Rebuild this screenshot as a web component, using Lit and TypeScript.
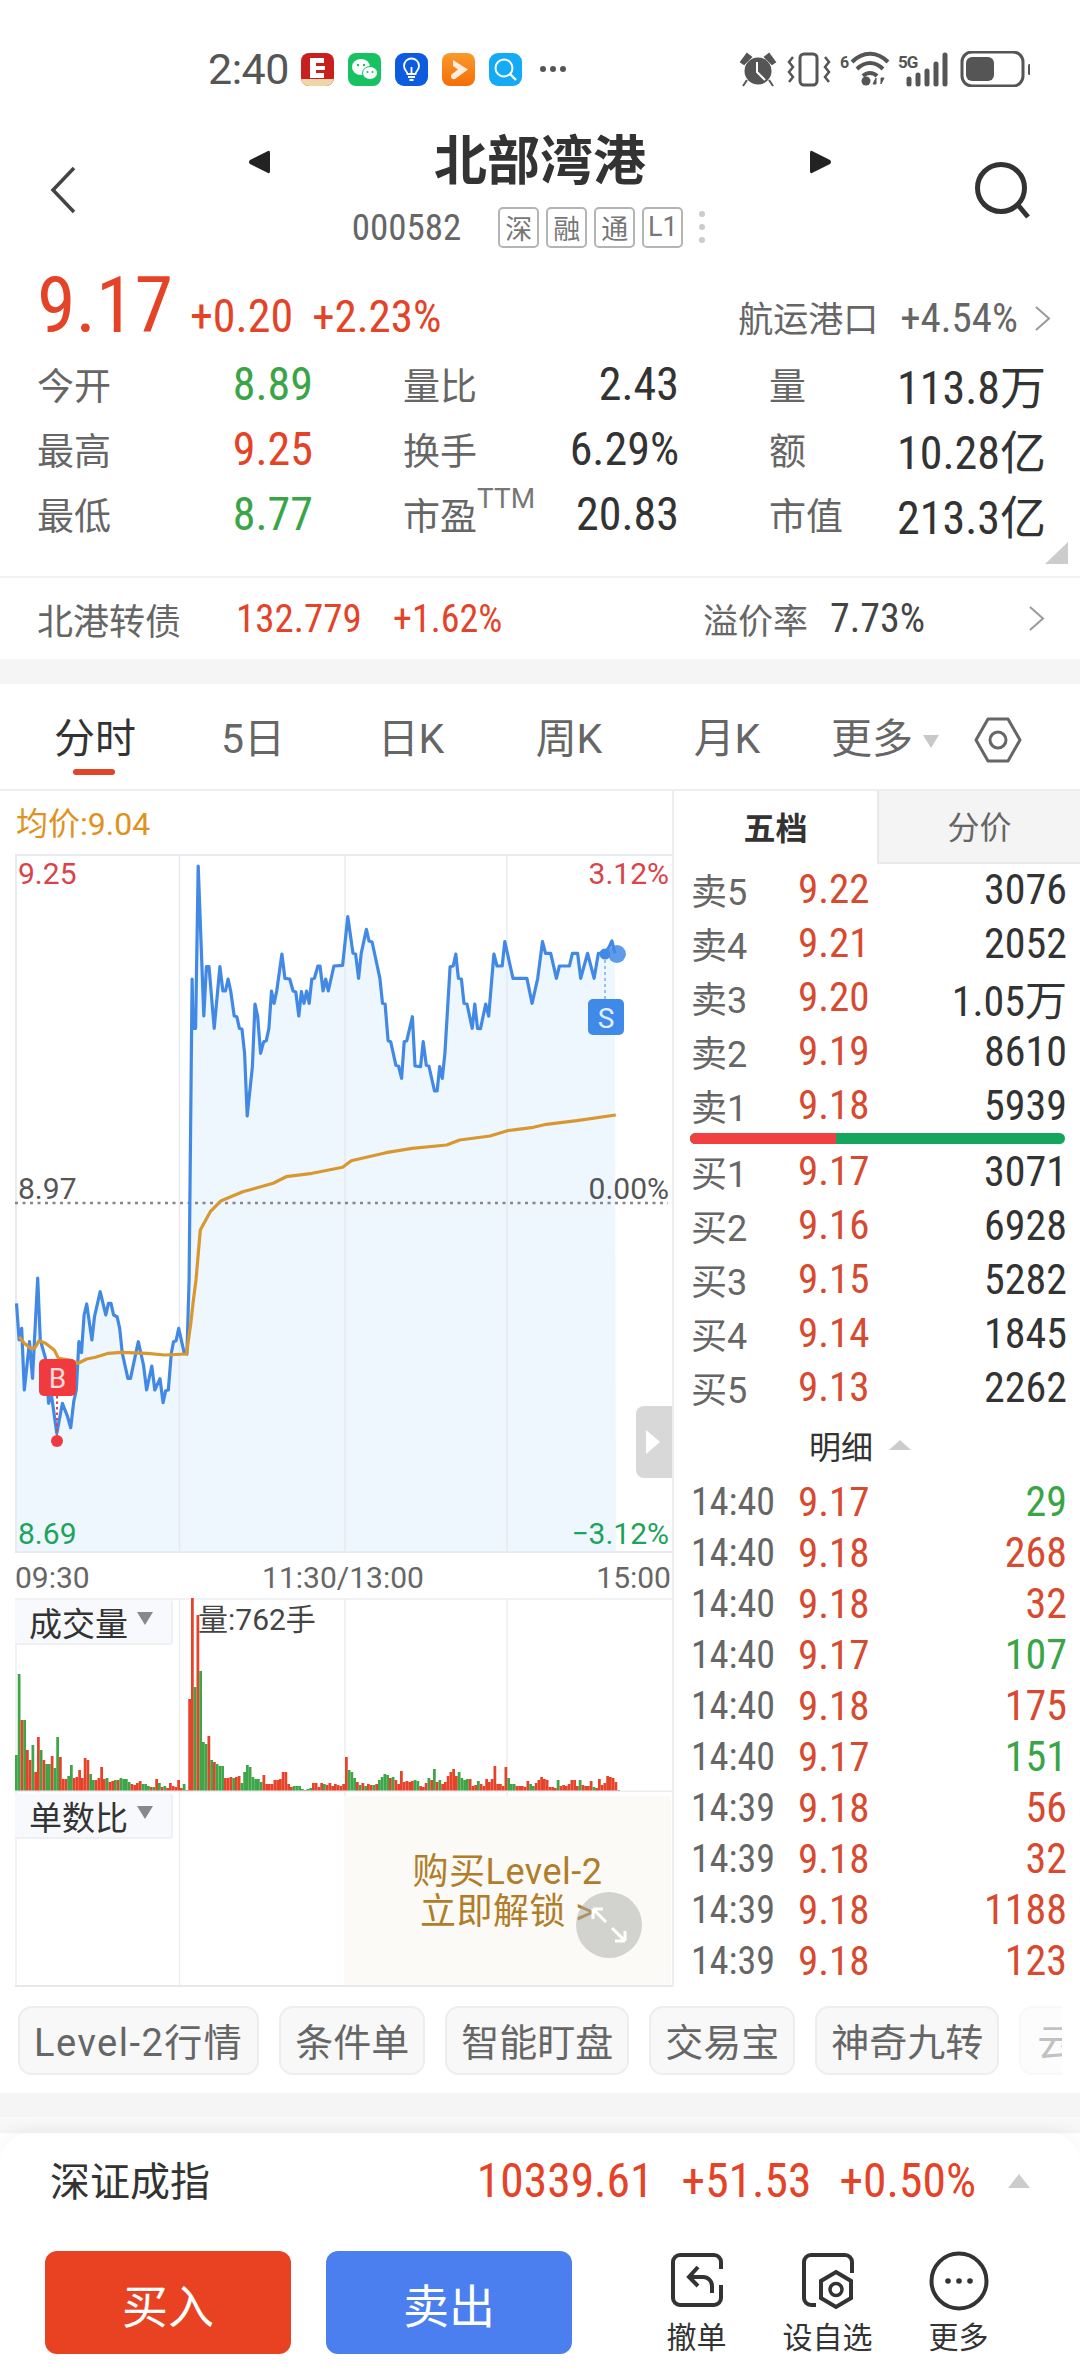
import {LitElement, css, html, svg} from 'lit';
import {customElement} from 'lit/decorators.js';

type Pt = [number, number];

// traced from the crops: x is page x * 2.306, y is (page y - 790) * 3
const PRICE: Pt[] = [
  [38,1540],[44,1650],[50,1615],[56,1800],[68,1655],[75,1765],[87,1464],[93,1650],[105,1705],[112,1840],[118,1810],[131,1930],
  [144,1840],[156,1880],[163,1913],[170,1835],[176,1800],[182,1655],[188,1688],[194,1575],[200,1542],[212,1650],[218,1580],
  [231,1505],[244,1575],[250,1540],[256,1540],[262,1575],[270,1580],[276,1615],[282,1690],[295,1765],[301,1765],[319,1655],
  [331,1725],[338,1800],[350,1728],[357,1800],[369,1766],[376,1838],[382,1802],[388,1800],[395,1690],[400,1655],[406,1652],
  [412,1615],[425,1690],[431,1692],[436,1470],[443,567],[445,715],[451,715],[457,228],[470,678],[476,530],[482,530],[494,715],
  [507,530],[514,603],[520,603],[526,567],[532,603],[540,678],[546,680],[552,715],[558,718],[564,790],[570,978],[582,830],
  [588,642],[594,678],[601,790],[608,755],[614,752],[620,715],[626,603],[632,640],[638,603],[650,492],[657,565],[668,567],
  [676,603],[682,606],[689,678],[695,605],[701,640],[707,603],[713,640],[719,567],[725,565],[733,528],[738,528],[745,603],
  [751,567],[757,603],[770,528],[790,526],[802,380],[814,490],[820,492],[827,565],[833,490],[845,418],[851,453],[858,456],
  [876,565],[882,640],[888,642],[895,752],[901,755],[913,826],[919,828],[926,865],[932,755],[938,752],[951,680],[957,828],
  [970,830],[976,755],[983,826],[989,828],[1002,903],[1008,903],[1014,830],[1020,865],[1026,790],[1038,530],[1045,528],
  [1051,492],[1057,565],[1064,567],[1070,640],[1077,642],[1089,715],[1095,642],[1101,715],[1108,716],[1120,642],[1127,678],
  [1139,492],[1146,528],[1158,528],[1164,455],[1183,565],[1215,565],[1227,640],[1240,565],[1251,455],[1258,490],[1270,490],
  [1283,565],[1290,528],[1313,528],[1320,490],[1332,490],[1339,565],[1355,490],[1370,565],[1380,490],[1395,490],[1405,470],
  [1411,453],[1418,490],
];

const AVG: Pt[] = [
  [44,1640],[56,1660],[70,1675],[80,1675],[90,1652],[105,1660],[125,1680],[135,1705],[160,1710],[180,1720],[200,1707],
  [220,1702],[250,1690],[280,1687],[340,1690],[380,1695],[430,1692],[440,1600],[445,1540],[452,1470],[462,1320],[485,1265],
  [510,1232],[560,1205],[630,1180],[660,1160],[720,1150],[790,1132],[810,1112],[890,1088],[950,1075],[1030,1065],[1060,1050],
  [1130,1038],[1170,1022],[1230,1012],[1260,1003],[1330,992],[1420,975],
];

const toPage = ([x, y]: Pt) => `${(x / 2.306).toFixed(1)},${(790 + y / 3).toFixed(1)}`;
const pricePts = PRICE.map(toPage).join(' ');
const avgPts = AVG.map(toPage).join(' ');

// one bar a minute, positive is red, negative is green
const VOLUME = [
  -37,-118,72,-72,42,32,-47,20,55,-42,32,-28,-28,36,-24,-55,35,13,13,-16,-27,14,15,22,14,34,32,-18,-12,12,14,25,13,-14,10,11,
  -12,12,-14,-13,-13,-10,8,7,9,11,-8,-8,-6,5,-5,13,-9,5,-6,4,9,6,5,12,4,-8,2,93,194,-105,177,-121,-50,-48,56,-32,30,-28,-26,-26,
  14,14,15,-14,15,16,-9,-20,-27,-25,-15,-13,-13,-10,17,8,8,8,12,12,13,20,20,8,5,-6,-6,-6,-3,2,-3,-4,9,9,5,9,-8,7,9,6,8,7,6,8,
  35,-22,-20,-14,10,-7,9,-6,8,7,-7,8,-12,-15,-18,-17,14,-15,12,8,21,10,11,10,11,-12,-11,6,5,9,-14,12,-23,10,-12,8,10,16,20,23,16,
  -20,-14,-12,-13,13,6,7,-11,8,6,13,10,13,26,8,8,6,25,-14,-8,-8,6,6,6,5,11,-8,-6,9,12,15,13,12,5,5,4,-12,6,7,6,8,12,12,6,-12,7,6,
  6,11,-5,4,13,7,9,16,15,14,10,-2,
];

const BOOK = [
  ['卖5', '9.22', '3076'], ['卖4', '9.21', '2052'], ['卖3', '9.20', '1.05万'], ['卖2', '9.19', '8610'], ['卖1', '9.18', '5939'],
];
const BIDS = [
  ['买1', '9.17', '3071'], ['买2', '9.16', '6928'], ['买3', '9.15', '5282'], ['买4', '9.14', '1845'], ['买5', '9.13', '2262'],
];
const TICKS: [string, string, string, boolean][] = [
  ['14:40', '9.17', '29', false], ['14:40', '9.18', '268', true], ['14:40', '9.18', '32', true], ['14:40', '9.17', '107', false],
  ['14:40', '9.18', '175', true], ['14:40', '9.17', '151', false], ['14:39', '9.18', '56', true], ['14:39', '9.18', '32', true],
  ['14:39', '9.18', '1188', true], ['14:39', '9.18', '123', true],
];
const CHIPS = ['Level-2行情', '条件单', '智能盯盘', '交易宝', '神奇九转'];

const chevron = html`<svg class="chev" width="17" height="27" viewBox="0 0 17 27"><path d="M2 2 L15 13.5 L2 25" fill="none" stroke="#999" stroke-width="2"/></svg>`;

@customElement('app-root')
export class AppRoot extends LitElement {
  static styles = css`
    :host {
      display: block;
      width: 1080px;
      height: 2376px;
      overflow: hidden;
      background: #fff;
      color: #333;
      font-family: Roboto, "Noto Sans CJK SC", sans-serif;
    }
    .n { font-stretch: 75%; }
    .red { color: #e44327; }
    .green { color: #3aa547; }
    .dark { color: #333; }

    .status { height: 102px; padding-top: 18px; display: flex; align-items: center; position: relative; }
    .time { margin-left: 208px; width: 93px; font-size: 43px; color: #555; line-height: 1; letter-spacing: -.5px; }
    .apps { display: flex; gap: 14px; }
    .more-dots { margin-left: 18px; }
    .sys { margin-left: auto; margin-right: 50px; }

    .header { height: 140px; display: flex; align-items: center; }
    .back { margin-left: 50px; }
    .mid { flex: 1; display: flex; flex-direction: column; align-items: center; height: 140px; padding-left: 30px; }
    .title-row { height: 84px; display: flex; align-items: center; gap: 164px; }
    .title { font-size: 53px; font-weight: 700; line-height: 1; color: #333; }
    .code-row { height: 56px; display: flex; align-items: center; margin-top: -5px; padding-right: 22px; }
    .code { font-size: 37px; color: #666; margin-right: 37px; }
    .tag { width: 41px; height: 41px; box-sizing: border-box; border: 2px solid #b4b4b4; border-radius: 5px; font-size: 27px;
      display: flex; align-items: center; justify-content: center; color: #777; margin-right: 7px; }
    .vdots { margin-left: 8px; }
    .search { margin-right: 48px; }

    .quote { height: 83px; padding: 7px 29px 0 37px; display: flex; align-items: baseline; }
    .last { font-size: 78px; width: 153px; line-height: 1; }
    .chg { font-size: 46px; margin-right: 19px; line-height: 1; }
    .chg.pct { font-size: 45px; }
    .sector { margin-left: auto; font-size: 35px; color: #666; margin-right: 22px; line-height: 1; }
    .sector-chg { font-size: 41px; color: #666; margin-right: 16px; line-height: 1; }
    .quote .chev { margin-bottom: 3px; }

    .stats { height: 226px; display: grid; grid-template-columns: 276px 276px 277px; column-gap: 90px; grid-auto-rows: 65px;
      padding-left: 37px; position: relative; box-sizing: border-box; padding-top: 1px; }
    .cell { display: flex; align-items: center; justify-content: space-between; }
    .lbl { font-size: 37px; color: #666; position: relative; white-space: nowrap; }
    .lbl sup { font-size: 28px; color: #777; line-height: 0; font-stretch: 88%; vertical-align: 22px; }
    .val { font-size: 46px; white-space: nowrap; }
    .corner { position: absolute; right: 12px; bottom: 12px; width: 0; height: 0; border-left: 23px solid transparent; border-bottom: 22px solid #ccc; }

    .cb { height: 83px; border-top: 2px solid #f2f2f2; display: flex; align-items: center; padding-left: 37px; box-sizing: border-box; }
    .cb span { white-space: nowrap; }
    .cb-name { width: 199px; font-size: 36px; color: #666; }
    .cb-val { width: 157px; font-size: 39px; }
    .cb-chg { width: 310px; font-size: 38px; }
    .cb-lab { width: 127px; font-size: 35px; color: #666; }
    .cb-pre { width: 198px; font-size: 40px; color: #444; }
    .band { height: 25px; background: #f5f5f5; }

    .tabs { display: grid; grid-template-columns: repeat(5, 158px) 158px 68px; padding: 6px 0 0 16px; align-items: center;
      position: relative; box-sizing: border-box; border-bottom: 2px solid #eee; height: 107px; }
    .tab { font-size: 41px; color: #666; text-align: center; line-height: 1; position: relative; white-space: nowrap; }
    .tab.on { color: #333; }
    .tab.on::after { content: ""; position: absolute; left: 57px; top: 50px; width: 42px; height: 6px; border-radius: 3px; background: #e0452c; }
    .tab i { display: inline-block; margin-left: 10px; vertical-align: 5px; border-left: 8px solid transparent; border-right: 8px solid transparent; border-top: 13px solid #c8c8c8; }

    .main { display: flex; height: 1196px; }
    .left { width: 672px; position: relative; flex: none; }
    .right { width: 406px; border-left: 2px solid #eee; height: 1196px; flex: none; }

    .avg { height: 63px; display: flex; align-items: center; padding: 0 0 4px 16px; font-size: 32px; color: #e0921e; box-sizing: border-box; }
    .plot { height: 699px; position: relative; }
    .plot svg, .vol svg { display: block; margin-left: 15px; }
    .tag-l { position: absolute; font-size: 30px; line-height: 1; }
    .handle { position: absolute; left: 636px; top: 552px; width: 36px; height: 72px; background: #d8d8d8; border-radius: 8px 0 0 8px; }
    .handle::after { content: ""; position: absolute; left: 10px; top: 24px; border-left: 14px solid #fff; border-top: 12px solid transparent; border-bottom: 12px solid transparent; }
    .axis { height: 45px; display: flex; justify-content: space-between; align-items: center; padding: 3px 1px 0 15px; box-sizing: border-box; font-size: 30px; color: #666; }
    .vol { height: 194px; position: relative; }
    .ratio { height: 195px; position: relative; }
    .chip-sel { position: absolute; left: 15px; top: 2px; width: 158px; height: 45px; background: #f8f9fc; border: 2px solid #eef0f4; border-top: 0; border-left: 0; box-sizing: border-box;
      border-radius: 3px; font-size: 33px; display: flex; align-items: center; padding-left: 14px; color: #333; }
    .chip-sel i { margin-left: 9px; margin-top: -6px; border-left: 8px solid transparent; border-right: 8px solid transparent; border-top: 13px solid #888; }
    .vol-now { position: absolute; left: 198px; top: -3px; font-size: 30px; color: #444; }
    .unlock { position: absolute; left: 344px; top: 4px; width: 327px; height: 189px; background: #fbfaf6; box-sizing: border-box; padding: 56px 0 0 0;
      color: #b07d2a; font-size: 36px; line-height: 40px; text-align: center; letter-spacing: .5px; }
    .expand { position: absolute; left: 232px; top: 96px; }

    .ob-tabs { display: flex; height: 73px; margin-bottom: -2px; }
    .ob-tab { width: 203px; display: flex; align-items: center; justify-content: center; font-size: 32px; font-weight: 700; color: #333; padding-bottom: 4px; box-sizing: border-box; }
    .ob-tab.off { background: #f4f4f4; font-weight: 400; color: #666; border: 2px solid #e9e9e9; border-right: 0; border-top: 0; }
    .row { display: flex; align-items: center; padding: 0 13px 0 17px; height: 54px; position: relative; }
    .row .a { width: 107px; font-size: 36px; color: #666; white-space: nowrap; }
    .row .p { font-size: 41px; color: #d84a30; }
    .row .q { margin-left: auto; font-size: 42px; color: #333; white-space: nowrap; }
    .split { height: 11px; margin: 1px 15px 0 16px; border-radius: 6px; display: flex; overflow: hidden; background: #13a65c; }
    .split b { display: block; width: 146px; background: #f04040; }
    .detail-h { height: 62px; display: flex; align-items: center; justify-content: center; font-size: 32px; color: #333; padding-right: 34px; }
    .detail-h i { margin-left: 16px; border-left: 11px solid transparent; border-right: 11px solid transparent; border-bottom: 10px solid #ccc; }
    .tick { height: 51px; }
    .tick .a { font-size: 38px; color: #666; font-stretch: 75%; }

    .chips { height: 106px; display: flex; gap: 20px; padding: 19px 0 0 18px; box-sizing: border-box; overflow: hidden; position: relative; }
    .chip { height: 69px; box-sizing: border-box; border: 2px solid #eee; background: #f8f8f8; border-radius: 14px; font-size: 38px; color: #666;
      display: flex; align-items: center; padding: 0 14px 3px; white-space: nowrap; flex: none; }
    .chip.l2 { letter-spacing: 1.5px; }
    .chip.fade { width: 60px; padding-left: 16px; overflow: hidden; opacity: .4; }
    .chips-end { position: absolute; right: 0; top: 0; width: 18px; height: 100%; background: #fff; }

    .shade { height: 16px; background: linear-gradient(#f9f9f9, #f4f4f4); }
    .footer { height: 243px; background: #fff; border-radius: 30px 30px 0 0; box-shadow: 0 -6px 14px rgba(0,0,0,.03); }
    .index { height: 96px; display: flex; align-items: center; padding: 0 50px; }
    .idx-name { font-size: 40px; color: #333; padding-bottom: 4px; }
    .idx-vals { margin-left: auto; display: flex; gap: 28px; font-size: 47.5px; margin-right: 32px; }
    .idx-up { border-left: 11px solid transparent; border-right: 11px solid transparent; border-bottom: 14px solid #ccc; }
    .actions { display: flex; padding: 22px 0 0 45px; align-items: flex-start; }
    .btn { width: 246px; height: 103px; border-radius: 12px; color: #fff; font-size: 46px; display: flex; align-items: center; justify-content: center; margin-right: 35px; }
    .buy { background: #e84222; }
    .sell { background: #4b7ff0; }
    .act { width: 131px; display: flex; flex-direction: column; align-items: center; font-size: 30px; color: #333; line-height: 1; gap: 12px; }
    .acts { display: flex; margin-left: 24px; }
    .act svg { display: block; height: 60px; }
  `;

  private renderStatusIcons() {
    return html`
      <div class="apps">
        <svg width="33" height="33" viewBox="0 0 33 33">
          <rect width="33" height="33" rx="8" fill="#c8201f"/>
          <path d="M0 26 H33 V25 a8 8 0 0 1 -8 8 H8 a8 8 0 0 1 -8 -8Z" fill="#eed6ac"/>
          <path d="M9 5 H23 V10 H15 V13 H24 V17 H15 V20 H23 V25 H9Z" fill="#fff"/>
        </svg>
        <svg width="33" height="33" viewBox="0 0 33 33">
          <rect width="33" height="33" rx="8" fill="#17c263"/>
          <ellipse cx="13" cy="14" rx="9" ry="8" fill="#fff"/>
          <ellipse cx="22" cy="20" rx="7.5" ry="6.5" fill="#fff" stroke="#17c263"/>
          <circle cx="10" cy="12" r="1.2" fill="#17c263"/><circle cx="16" cy="12" r="1.2" fill="#17c263"/>
          <circle cx="19.5" cy="19" r="1" fill="#17c263"/><circle cx="24.5" cy="19" r="1" fill="#17c263"/>
        </svg>
        <svg width="33" height="33" viewBox="0 0 33 33">
          <rect width="33" height="33" rx="9" fill="#0d5ce0"/>
          <path d="M12.5 21 C12 18 9 17 9 13 a7.500 7.500 0 0 1 15 0 C24 17 21 18 20.500 21Z M13 24 H20 M14.500 27 H18.500 M16.500 21 V14" fill="none" stroke="#fff" stroke-width="1.800"/>
        </svg>
        <svg width="33" height="33" viewBox="0 0 33 33">
          <defs><linearGradient id="og" x1="0" y1="0" x2="0" y2="1"><stop offset="0" stop-color="#fa9a2c"/><stop offset="1" stop-color="#f56d08"/></linearGradient></defs>
          <rect width="33" height="33" rx="8" fill="url(#og)"/>
          <path d="M11 7 L26 16.500 L13 26 C9 27 8 23 10 21 L16 16.500 L11 13Z" fill="#fff" opacity=".85"/>
        </svg>
        <svg width="33" height="33" viewBox="0 0 33 33">
          <rect width="33" height="33" rx="9" fill="#14aaf5"/>
          <circle cx="15" cy="15" r="8.500" fill="none" stroke="#fff" stroke-width="2"/>
          <path d="M21 21 L27 27" stroke="#fff" stroke-width="2.400"/>
        </svg>
      </div>
      <svg class="more-dots" width="26" height="6" viewBox="0 0 26 6">
        <circle cx="3" cy="3" r="3" fill="#555"/><circle cx="13" cy="3" r="3" fill="#555"/><circle cx="23" cy="3" r="3" fill="#555"/>
      </svg>
      <svg class="sys" width="292" height="36" viewBox="738 51 292 36">
        <g fill="#555">
          <circle cx="758" cy="71" r="13.500"/>
          <path d="M741 62 L747 54 L751 57 L744 64Z M775 62 L769 54 L765 57 L772 64Z M747 80 L743 86 M769 80 L773 86" stroke="#555" stroke-width="2"/>
        </g>
        <path d="M757 62 V72 L765 80" fill="none" stroke="#fff" stroke-width="2"/>
        <rect x="800" y="54" width="17" height="31" rx="4" fill="none" stroke="#555" stroke-width="3"/>
        <path d="M793 57 L789 62 L793 67 L789 72 L793 77 L789 82 M825 57 L829 62 L825 67 L829 72 L825 77 L829 82" fill="none" stroke="#555" stroke-width="2.500"/>
        <text x="840" y="68" font-size="16" font-weight="700" fill="#555" font-family="Roboto">6</text>
        <path d="M852 62 C864 50 878 52 888 62 M857 69 C865 61 875 61 883 69 M863 76 C867 72 873 72 877 76" fill="none" stroke="#555" stroke-width="4"/>
        <circle cx="866" cy="81" r="4.500" fill="#555"/>
        <path d="M876 78 V84 L873 84Z M881 78 V84 L884 78Z" fill="#555" stroke="#555"/>
        <text x="898" y="68" font-size="17" font-weight="700" fill="#555" font-family="Roboto" letter-spacing="-1">5G</text>
        <g stroke="#555" stroke-width="5" stroke-linecap="round">
          <path d="M909 79 V84 M918 75 V84 M927 71 V84 M936 64 V84 M945 55 V84"/>
        </g>
        <rect x="962" y="52" width="61" height="34" rx="10" fill="none" stroke="#555" stroke-width="3"/>
        <rect x="966" y="57" width="28" height="24" rx="6" fill="#555"/>
        <rect x="1028" y="64" width="3" height="11" rx="1.500" fill="#555"/>
      </svg>`;
  }

  private renderPlot() {
    const end = PRICE[PRICE.length - 1];
    return html`
      <div class="plot">
        <svg width="657" height="699" viewBox="15 854 657 699">
          <polygon points="15.500,1553 ${pricePts} 616,1553" fill="#eef6fe"></polygon>
          <path d="M15 855 H672 M16 854 V1553 M15 1552 H672" fill="none" stroke="#e8ebf0" stroke-width="2"/>
          <path d="M179.500 854 V1553 M345 854 V1553 M507 854 V1553" stroke="#e6eaf0" stroke-width="1.500"/>
          <path d="M15 1203 H668" stroke="#888" stroke-width="2.500" stroke-dasharray="3 4.500"/>
          <polyline points=${pricePts} fill="none" stroke="#4289e6" stroke-width="3.200" stroke-linejoin="round"></polyline>
          <polyline points=${avgPts} fill="none" stroke="#d9982f" stroke-width="3.200" stroke-linejoin="round"></polyline>
          <path d="M605 954 V999" stroke="#4289e6" stroke-width="1" stroke-dasharray="3 3"/>
          <circle cx="605" cy="954" r="5.500" fill="#4289e6"/>
          <circle cx=${end[0] / 2.306 + 2} cy="954" r="9" fill="#4289e6" opacity=".85"/>
          <rect x="588" y="999" width="36" height="36" rx="5" fill="#3f8ae8"/>
          <text x="606" y="1028" font-size="28" fill="#e4eefb" text-anchor="middle" font-family="Roboto">S</text>
          <path d="M57 1396 V1436" stroke="#e8404a" stroke-width="2" stroke-dasharray="2.500 3"/>
          <circle cx="57" cy="1441" r="6" fill="#ef3a40"/>
          <rect x="39" y="1359" width="37" height="37" rx="5" fill="#f03a3f"/>
          <text x="57.500" y="1388" font-size="28" fill="#fbdcdc" text-anchor="middle" font-family="Roboto">B</text>
        </svg>
        <span class="tag-l" style="left:18px;top:5px;color:#d9434a">9.25</span>
        <span class="tag-l" style="right:3px;top:5px;color:#d9434a">3.12%</span>
        <span class="tag-l" style="left:18px;top:320px;color:#555">8.97</span>
        <span class="tag-l" style="right:3px;top:320px;color:#555">0.00%</span>
        <span class="tag-l" style="left:18px;top:665px;color:#1ca35c">8.69</span>
        <span class="tag-l" style="right:3px;top:665px;color:#1ca35c">−3.12%</span>
        <div class="handle"></div>
      </div>`;
  }

  private renderVolume() {
    const bars = VOLUME.map((v, i) => {
      const h = Math.abs(v);
      return svg`<rect x=${15 + i * 2.75} y=${194 - h} width="2.75" height=${h} fill=${v > 0 ? '#e5432a' : '#3ea548'}></rect>`;
    });
    return html`
      <div class="vol">
        <svg width="657" height="194" viewBox="15 0 657 194">
          <path d="M15 1 H672 M16 0 V194 M179.500 0 V194 M345 0 V194 M507 0 V194" fill="none" stroke="#eceef2" stroke-width="1.500"/>
          ${bars}
          <path d="M15 193.500 H672" stroke="#eceef2" stroke-width="2"/>
        </svg>
        <div class="chip-sel">成交量<i></i></div>
        <div class="vol-now">量:762手</div>
      </div>
      <div class="ratio">
        <svg style="display:block;margin-left:15px" width="657" height="195" viewBox="15 0 657 195">
          <path d="M16 0 V195 M179.500 0 V195 M345 0 V195 M507 0 V195" fill="none" stroke="#eceef2" stroke-width="1.500"/>
          <path d="M15 194 H672" stroke="#e6e8ec" stroke-width="2"/>
        </svg>
        <div class="chip-sel">单数比<i></i></div>
        <div class="unlock">
          <div>购买Level-2</div>
          <div>立即解锁 &gt;</div>
          <svg class="expand" width="66" height="66" viewBox="0 0 66 66">
            <circle cx="33" cy="33" r="33" fill="rgba(170,170,165,.5)"/>
            <path d="M17 17 L30 30 M17 17 V27 M17 17 H27 M49 49 L36 36 M49 49 V39 M49 49 H39" fill="none" stroke="#fff" stroke-width="3"/>
          </svg>
        </div>
      </div>`;
  }

  private renderBook() {
    const row = (r: string[]) => html`<div class="row"><span class="a">${r[0]}</span><span class="p n">${r[1]}</span><span class="q n">${r[2]}</span></div>`;
    return html`
      <div class="ob-tabs">
        <div class="ob-tab">五档</div>
        <div class="ob-tab off">分价</div>
      </div>
      ${BOOK.map(row)}
      <div class="split"><b></b></div>
      ${BIDS.map(row)}
      <div class="detail-h">明细<i></i></div>
      ${TICKS.map(([t, p, q, up]) => html`
        <div class="row tick">
          <span class="a">${t}</span><span class="p n">${p}</span>
          <span class="q n" style="color:${up ? '#d84a30' : '#3aa547'}">${q}</span>
        </div>`)}`;
  }

  render() {
    return html`
      <div class="status">
        <span class="time">2:40</span>
        ${this.renderStatusIcons()}
      </div>

      <div class="header">
        <svg class="back" width="26" height="48" viewBox="0 0 26 48"><path d="M24 2 L3 24 L24 46" fill="none" stroke="#444" stroke-width="3.500"/></svg>
        <div class="mid">
          <div class="title-row">
            <svg width="22" height="26" viewBox="0 0 22 26"><path d="M20 2 Q22 1 22 4 V22 Q22 25 20 24 L2 15 Q0 13 2 11Z" fill="#222"/></svg>
            <span class="title">北部湾港</span>
            <svg width="22" height="26" viewBox="0 0 22 26"><path d="M2 2 Q0 1 0 4 V22 Q0 25 2 24 L20 15 Q22 13 20 11Z" fill="#222"/></svg>
          </div>
          <div class="code-row">
            <span class="code n">000582</span>
            <span class="tag">深</span><span class="tag">融</span><span class="tag">通</span><span class="tag">L1</span>
            <svg class="vdots" width="8" height="34" viewBox="0 0 8 34"><circle cx="4" cy="4" r="3" fill="#ccc"/><circle cx="4" cy="17" r="3" fill="#ccc"/><circle cx="4" cy="30" r="3" fill="#ccc"/></svg>
          </div>
        </div>
        <svg class="search" width="58" height="58" viewBox="0 0 58 58"><circle cx="27" cy="27" r="23.500" fill="none" stroke="#333" stroke-width="5"/><path d="M44 44 L54 56" stroke="#333" stroke-width="5"/></svg>
      </div>

      <div class="quote">
        <span class="last n red">9.17</span>
        <span class="chg n red">+0.20</span>
        <span class="chg pct n red">+2.23%</span>
        <span class="sector">航运港口</span>
        <span class="sector-chg n">+4.54%</span>
        ${chevron}
      </div>

      <div class="stats">
        <div class="cell"><span class="lbl">今开</span><span class="val n green">8.89</span></div>
        <div class="cell"><span class="lbl">量比</span><span class="val n dark">2.43</span></div>
        <div class="cell"><span class="lbl">量</span><span class="val n dark">113.8万</span></div>
        <div class="cell"><span class="lbl">最高</span><span class="val n red">9.25</span></div>
        <div class="cell"><span class="lbl">换手</span><span class="val n dark">6.29%</span></div>
        <div class="cell"><span class="lbl">额</span><span class="val n dark">10.28亿</span></div>
        <div class="cell"><span class="lbl">最低</span><span class="val n green">8.77</span></div>
        <div class="cell"><span class="lbl">市盈<sup>TTM</sup></span><span class="val n dark">20.83</span></div>
        <div class="cell"><span class="lbl">市值</span><span class="val n dark">213.3亿</span></div>
        <div class="corner"></div>
      </div>

      <div class="cb">
        <span class="cb-name">北港转债</span>
        <span class="cb-val n red">132.779</span>
        <span class="cb-chg n red">+1.62%</span>
        <span class="cb-lab">溢价率</span>
        <span class="cb-pre n">7.73%</span>
        ${chevron}
      </div>
      <div class="band"></div>

      <div class="tabs">
        <div class="tab on">分时</div>
        <div class="tab">5日</div>
        <div class="tab">日K</div>
        <div class="tab">周K</div>
        <div class="tab">月K</div>
        <div class="tab">更多<i></i></div>
        <svg width="48" height="46" viewBox="0 0 48 46" style="justify-self:center">
          <path d="M14 2 H34 L46 23 L34 44 H14 L2 23Z" fill="none" stroke="#666" stroke-width="3" stroke-linejoin="round"/>
          <circle cx="24" cy="23" r="8" fill="none" stroke="#666" stroke-width="3"/>
        </svg>
      </div>

      <div class="main">
        <div class="left">
          <div class="avg">均价:9.04</div>
          ${this.renderPlot()}
          <div class="axis"><span>09:30</span><span>11:30/13:00</span><span>15:00</span></div>
          ${this.renderVolume()}
        </div>
        <div class="right">${this.renderBook()}</div>
      </div>

      <div class="chips">
        ${CHIPS.map((c, i) => html`<div class="chip ${i === 0 ? 'l2' : ''}">${c}</div>`)}
        <div class="chip fade">云</div>
        <div class="chips-end"></div>
      </div>
      <div class="band" style="height:24px"></div>
      <div class="shade"></div>

      <div class="footer">
        <div class="index">
          <span class="idx-name">深证成指</span>
          <div class="idx-vals n red"><span>10339.61</span><span>+51.53</span><span>+0.50%</span></div>
          <span class="idx-up"></span>
        </div>
        <div class="actions">
          <div class="btn buy">买入</div>
          <div class="btn sell">卖出</div>
          <div class="acts">
            <div class="act">
              <svg width="56" height="60" viewBox="0 0 56 60">
                <path d="M52 18 V11 a7 7 0 0 0 -7 -7 H11 a7 7 0 0 0 -7 7 V47 a7 7 0 0 0 7 7 H45 a7 7 0 0 0 7 -7 V34" fill="none" stroke="#333" stroke-width="4"/>
                <path d="M29 16 L20 26 L29 35 M20 26 H34 a9 9 0 0 1 9 9 V42" fill="none" stroke="#333" stroke-width="4"/>
              </svg>
              <span>撤单</span>
            </div>
            <div class="act">
              <svg width="56" height="60" viewBox="0 0 56 60">
                <path d="M52 22 V11 a7 7 0 0 0 -7 -7 H11 a7 7 0 0 0 -7 7 V47 a7 7 0 0 0 7 7 H16" fill="none" stroke="#333" stroke-width="4"/>
                <path d="M36 21 L51 30 V47 L36 56 L21 47 V30Z" fill="none" stroke="#333" stroke-width="4"/>
                <circle cx="36" cy="38.500" r="6" fill="none" stroke="#333" stroke-width="3.500"/>
              </svg>
              <span>设自选</span>
            </div>
            <div class="act">
              <svg width="60" height="60" viewBox="0 0 60 60">
                <circle cx="30" cy="30" r="27.500" fill="none" stroke="#333" stroke-width="4"/>
                <circle cx="19" cy="30" r="2.800" fill="#333"/><circle cx="30" cy="30" r="2.800" fill="#333"/><circle cx="41" cy="30" r="2.800" fill="#333"/>
              </svg>
              <span>更多</span>
            </div>
          </div>
        </div>
      </div>
    `;
  }
}
